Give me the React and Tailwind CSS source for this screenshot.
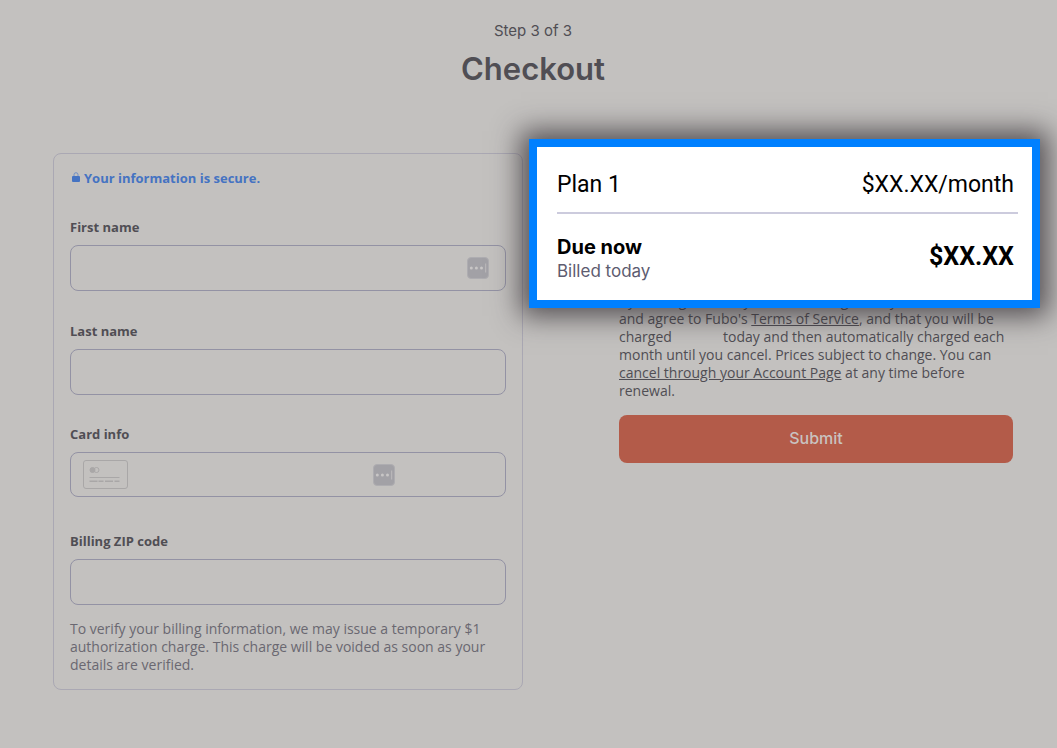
import { useState } from 'react';

function DotsBadge() {
  return (
    <svg width="22" height="22" viewBox="0 0 22 22" aria-hidden="true">
      <rect x="0.5" y="0.5" width="21" height="21" rx="3.5" fill="#a2a1a6" stroke="#aeadb1" />
      <circle cx="4.3" cy="11" r="1.5" fill="#c8c6c6" />
      <circle cx="9.4" cy="11" r="1.5" fill="#c8c6c6" />
      <circle cx="14.5" cy="11" r="1.5" fill="#c8c6c6" />
      <path d="M18.7 6.5v9" stroke="#bdbcbd" />
    </svg>
  );
}

function CardIcon() {
  return (
    <svg width="46" height="30" viewBox="0 0 46 30" fill="none" stroke="#a9a7a7" aria-hidden="true">
      <rect x="0.5" y="0.5" width="44" height="28" rx="2.5" />
      <circle cx="9.5" cy="10" r="2.5" fill="#a9a7a7" />
      <circle cx="13.5" cy="10" r="2.5" />
      <path d="M6.5 17.5h30" />
      <path d="M6.5 21.2h8M15.5 21.2h5M22 21.2h8M31.5 21.2h5" strokeWidth="1.5" />
    </svg>
  );
}

function LockIcon() {
  return (
    <svg className="mb-0.5" width="8" height="10" viewBox="0 0 8 10" fill="none" aria-hidden="true">
      <path d="M2 4.5V2.7a2 2 0 0 1 4 0v1.8" stroke="#6f8fc6" />
      <rect y="4" width="8" height="6" rx="1" fill="#4573c2" />
    </svg>
  );
}

function Field({ id, label, value, onChange, className, inputClass, children }) {
  return (
    <div className={className}>
      <label htmlFor={id} className="block text-[13px] leading-5 font-bold text-[#504e54]">{label}</label>
      <div className="relative mt-2">
        <input
          id={id}
          value={value}
          onChange={onChange}
          className={`block w-full rounded-lg border border-[#9392a4] bg-transparent px-3 text-base text-[#504e54] ${inputClass}`}
        />
        {children}
      </div>
    </div>
  );
}

export default function App() {
  const [form, setForm] = useState({ first: '', last: '', card: '', zip: '' });
  const set = (key) => (e) => setForm(prev => ({ ...prev, [key]: e.target.value }));

  return (
    <main className="min-h-screen bg-[#c3c1bf] pt-[21px] pr-11 pb-10 pl-[53px] font-['Inter',sans-serif] text-[#504e54]">
      <header className="text-center">
        <p className="text-[15px] leading-5">Step 3 of 3</p>
        <h1 className="mt-2 text-[31px] leading-10 font-semibold">Checkout</h1>
      </header>

      <div className="mt-16 grid grid-cols-[470fr_394fr] items-start gap-24">
        <form id="checkout" onSubmit={(e) => e.preventDefault()} className="rounded-lg border border-[#aaa8b3] px-4 pt-[15px] pb-[15px] font-['Open_Sans',sans-serif]">
          <p className="flex items-center gap-1 pl-0.5 text-[13px] leading-[18px] font-bold text-[#4573c2]">
            <LockIcon />
            Your information is secure.
          </p>

          <Field id="first" label="First name" value={form.first} onChange={set('first')} className="mt-[30px]" inputClass="h-[46px]">
            <span className="absolute top-3 right-[17px]"><DotsBadge /></span>
          </Field>
          <Field id="last" label="Last name" value={form.last} onChange={set('last')} className="mt-[30px]" inputClass="h-[46px]" />
          <Field id="card" label="Card info" value={form.card} onChange={set('card')} className="mt-[29px]" inputClass="h-[45px] pl-[68px]">
            <span className="absolute top-2 left-[13px]"><CardIcon /></span>
            <span className="absolute top-3 right-[111px]"><DotsBadge /></span>
          </Field>
          <Field id="zip" label="Billing ZIP code" value={form.zip} onChange={set('zip')} className="mt-[34px]" inputClass="h-[46px]" />

          <p className="mt-[15px] text-sm leading-[18px] text-[#6a6871]">
            To verify your billing information, we may issue a temporary $1<br />
            authorization charge. This charge will be voided as soon as your<br />
            details are verified.
          </p>
        </form>

        <aside className="relative pt-[139px]">
          <p className="font-['Open_Sans',sans-serif] text-sm leading-[18px] whitespace-nowrap">
            By clicking Submit, you acknowledge that you have<br />
            and agree to Fubo's <a href="#terms" className="font-medium underline">Terms of Service</a>, and that you will be<br />
            charged <span className="inline-block w-11" /> today and then automatically charged each<br />
            month until you cancel. Prices subject to change. You can<br />
            <a href="#account" className="font-medium underline">cancel through your Account Page</a> at any time before<br />
            renewal.
          </p>
          <button type="submit" form="checkout" className="mt-[15px] h-12 w-full rounded-lg bg-[#b35b49] pb-0.5 text-base font-medium text-[#c9c3c0]">
            Submit
          </button>

          {/* order summary callout */}
          <section className="absolute -top-3.5 -right-[27px] -left-[90px] h-[169px] border-8 border-[#0080ff] bg-white px-5 pt-[22px] text-black shadow-[0_0_26px_8px_rgba(45,40,45,0.75)]">
            <div className="-mr-[6px] flex items-center justify-between border-b-2 border-[#cccbdd] pr-1 pb-[11px] font-['Roboto',sans-serif] text-[23px] leading-8">
              <span>Plan 1</span>
              <span>$XX.XX/month</span>
            </div>
            <div className="mt-5 -mr-0.5 flex items-center justify-between">
              <div>
                <p className="text-[20px] leading-[26px] font-bold">Due now</p>
                <p className="text-[17px] leading-[22px] text-[#5d5c70]">Billed today</p>
              </div>
              <span className="pb-0.5 font-['Roboto',sans-serif] text-[25px] leading-8 font-bold">$XX.XX</span>
            </div>
          </section>
        </aside>
      </div>
    </main>
  );
}
